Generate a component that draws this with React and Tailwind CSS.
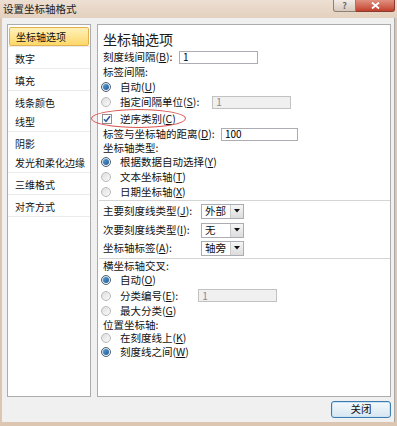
import React from 'react';

const FONT = { fontFamily: '"Noto Sans CJK SC", "Noto Sans", sans-serif' };

// label with underlined access key, e.g. 刻度线间隔(B):
const Mn = ({ text, k, colon }) => (
  <span className="whitespace-nowrap">
    {text}
    {k && (
      <>
        (<span className="underline">{k}</span>)
      </>
    )}
    {colon && ':'}
  </span>
);

const Radio = ({ checked }) =>
  checked ? (
    <span className="w-[10px] h-[10px] rounded-full border border-[#4f5f70] bg-gradient-to-br from-[#cfd6dd] to-white flex items-center justify-center shrink-0">
      <span className="w-[6px] h-[6px] rounded-full bg-gradient-to-br from-[#5aa0d8] to-[#1d5a96]" />
    </span>
  ) : (
    <span className="w-[10px] h-[10px] rounded-full border border-[#b9b9b9] bg-gradient-to-br from-[#dedede] to-[#fafafa] shrink-0" />
  );

const Checkbox = () => (
  <span className="w-[10px] h-[10px] border border-[#8e8f8f] bg-white flex items-center justify-center shrink-0">
    <svg width="8" height="8" viewBox="0 0 8 8">
      <path d="M1 4.2 L3 6.3 L7 1.2" fill="none" stroke="#2b5ca6" strokeWidth="1.6" />
    </svg>
  </span>
);

const TextBox = ({ value, width, disabled }) => (
  <div
    className={
      'h-[13px] border flex items-center pl-[3px] text-[10px] ' +
      (disabled ? 'bg-[#f0f0f0] border-[#c2c2c2] text-[#8a8a8a]' : 'bg-white border-[#abadb3] text-black')
    }
    style={{ width }}
  >
    {value}
  </div>
);

const Combo = ({ value }) => (
  <div className="w-[43px] h-[15px] bg-white border border-[#abadb3] flex items-center">
    <span className="flex-1 pl-[3px] text-[10.5px] leading-none">{value}</span>
    <span className="w-[13px] h-[13px] border-l border-[#c9c9c9] bg-gradient-to-b from-[#f6f6f6] to-[#dcdcdc] flex items-center justify-center">
      <svg width="6" height="4" viewBox="0 0 6 4">
        <path d="M0 0 H6 L3 3.5 Z" fill="#111" />
      </svg>
    </span>
  </div>
);

const Row = ({ h, children, className = '' }) => (
  <div className={'flex items-center ' + className} style={{ height: h }}>
    {children}
  </div>
);

const RadioRow = ({ h, checked, text, k, colon, after }) => (
  <Row h={h} className="pl-[2px]">
    <Radio checked={checked} />
    <span className="ml-[9px]">
      <Mn text={text} k={k} colon={colon} />
    </span>
    {after}
  </Row>
);

const LabelRow = ({ h, text, k, colon, labelW, after }) => (
  <Row h={h} className="pl-[4px]">
    <span className="shrink-0" style={{ width: labelW }}>
      <Mn text={text} k={k} colon={colon} />
    </span>
    {after}
  </Row>
);

const groups = [
  ['坐标轴选项'],
  ['数字'],
  ['填充'],
  ['线条颜色', '线型'],
  ['阴影', '发光和柔化边缘'],
  ['三维格式'],
  ['对齐方式'],
];

export default function App() {
  return (
    <div
      className="w-[397px] h-[426px] bg-[#dcc6b2] flex flex-col overflow-hidden text-[#111]"
      style={FONT}
    >
      {/* title bar */}
      <div className="h-[18px] flex items-start bg-gradient-to-b from-[#eddfd2] to-[#e4d0be] relative">
        <span className="pl-[3px] pt-[1px] text-[10.5px] leading-[16px] text-[#1a1a1a]">设置坐标轴格式</span>
        <div className="flex-1" />
        <div className="flex mr-[2px]">
          <div className="w-[23px] h-[12px] rounded-bl-[3px] border border-t-0 border-[#8d7f74] bg-gradient-to-b from-[#f3ece6] to-[#d7c9bd] flex items-center justify-center text-[9px] font-bold leading-none text-[#6d6d6d]">
            ?
          </div>
          <div className="w-[39px] h-[12px] rounded-br-[3px] border border-t-0 border-l-0 border-[#8a3a2e] bg-gradient-to-b from-[#e0907f] to-[#c1402c] flex items-center justify-center">
            <svg width="9" height="7" viewBox="0 0 9 7">
              <path d="M1 0.5 L8 6.5 M8 0.5 L1 6.5" stroke="#fff" strokeWidth="1.8" />
            </svg>
          </div>
        </div>
      </div>

      {/* dialog body */}
      <div className="flex-1 mx-[2px] mb-[4px] bg-[#f0f0f0] border-r border-[#a9a9a9] flex flex-col pt-[6px] pl-[5px] pr-[3px]">
        <div className="h-[373px] flex gap-[6px] relative">
          {/* left category list */}
          <div className="w-[84px] h-full bg-white border border-[#acacac] text-[10px]">
            {groups.map((g, gi) => (
              <div key={gi} className="pt-[2px] border-b border-[#ececec]">
                {g.map((item) => (
                  <div
                    key={item}
                    className={
                      'h-[19px] flex items-center pl-[6px] mx-[1px] whitespace-nowrap ' +
                      (gi === 0
                        ? 'rounded-[2px] border border-[#e3b24f] bg-gradient-to-b from-[#fff1b8] to-[#fcd868]'
                        : '')
                    }
                  >
                    {item}
                  </div>
                ))}
              </div>
            ))}
          </div>

          {/* right options panel */}
          <div className="flex-1 h-full bg-white border border-[#acacac] text-[10.5px] leading-[14px] pl-[1px]">
            <div className="h-[25px] pt-[3px] pl-[4px] flex items-center text-[14px] text-[#1b1b1b]">坐标轴选项</div>
            <LabelRow h={14} text="刻度线间隔" k="B" colon labelW={76} after={<TextBox value="1" width={79} />} />
            <LabelRow h={16} text="标签间隔" colon />
            <RadioRow h={14} checked text="自动" k="U" />
            <RadioRow
              h={16}
              text="指定间隔单位"
              k="S"
              colon
              after={<div className="ml-[13px]"><TextBox value="1" width={79} disabled /></div>}
            />
            <Row h={17} className="pl-[3px]">
              <Checkbox />
              <span className="ml-[8px]">
                <Mn text="逆序类别" k="C" />
              </span>
            </Row>
            <LabelRow h={14} text="标签与坐标轴的距离" k="D" colon labelW={118} after={<TextBox value="100" width={77} />} />
            <LabelRow h={13} text="坐标轴类型" colon />
            <RadioRow h={15} checked text="根据数据自动选择" k="Y" />
            <RadioRow h={16} text="文本坐标轴" k="T" />
            <RadioRow h={14} text="日期坐标轴" k="X" />
            <div className="mt-[1px] border-t border-[#d5d5d5]" />
            <LabelRow h={20} text="主要刻度线类型" k="J" colon labelW={98} after={<Combo value="外部" />} />
            <LabelRow h={18} text="次要刻度线类型" k="I" colon labelW={98} after={<Combo value="无" />} />
            <LabelRow h={18} text="坐标轴标签" k="A" colon labelW={98} after={<Combo value="轴旁" />} />
            <div className="mt-[1px] border-t border-[#d5d5d5]" />
            <LabelRow h={14} text="横坐标轴交叉" colon />
            <RadioRow h={14} checked text="自动" k="O" />
            <RadioRow
              h={17}
              text="分类编号"
              k="E"
              colon
              after={<div className="ml-[20px]"><TextBox value="1" width={79} disabled /></div>}
            />
            <RadioRow h={14} text="最大分类" k="G" />
            <LabelRow h={13} text="位置坐标轴" colon />
            <RadioRow h={14} text="在刻度线上" k="K" />
            <RadioRow h={14} checked text="刻度线之间" k="W" />
          </div>

          {/* red annotation ellipse */}
          <div className="absolute left-[84px] top-[85px] w-[95px] h-[19px] rounded-[50%] border border-[#d9534f]" />
        </div>

        {/* footer */}
        <div className="flex justify-end mt-[4px]">
          <button className="w-[60px] h-[17px] rounded-[3px] border border-[#3d7bad] bg-gradient-to-b from-[#f4f9fc] to-[#d6e6f1] text-[10.5px] leading-none text-[#111] shadow-[inset_0_0_0_1px_#c7e3f5]">
            关闭
          </button>
        </div>
      </div>
    </div>
  );
}
